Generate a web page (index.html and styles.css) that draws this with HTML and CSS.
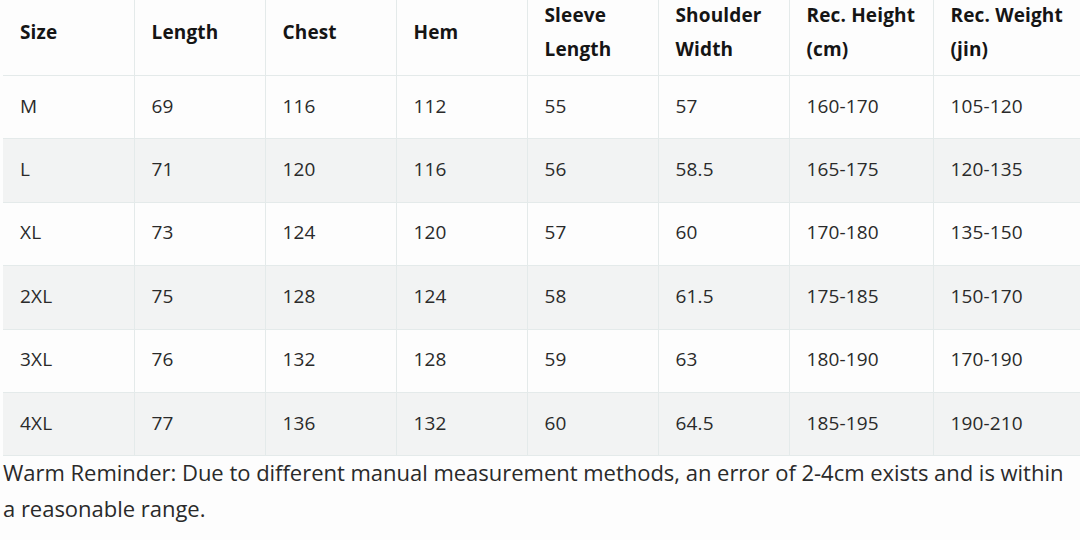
FILE: index.html
```html
<!DOCTYPE html>
<html lang="en">
<head>
<meta charset="utf-8">
<link rel="stylesheet" href="styles.css">
</head>
<body>
<div class="page">
  <table class="size-table">
    <colgroup>
      <col class="c-std"><col class="c-std"><col class="c-std"><col class="c-std">
      <col class="c-std"><col class="c-std"><col class="c-wide"><col class="c-last">
    </colgroup>
    <thead>
      <tr>
        <th>Size</th><th>Length</th><th>Chest</th><th>Hem</th>
        <th>Sleeve<br>Length</th><th>Shoulder<br>Width</th>
        <th>Rec. Height<br>(cm)</th><th>Rec. Weight<br>(jin)</th>
      </tr>
    </thead>
    <tbody>
      <tr><td>M</td><td>69</td><td>116</td><td>112</td><td>55</td><td>57</td><td>160-170</td><td>105-120</td></tr>
      <tr><td>L</td><td>71</td><td>120</td><td>116</td><td>56</td><td>58.5</td><td>165-175</td><td>120-135</td></tr>
      <tr><td>XL</td><td>73</td><td>124</td><td>120</td><td>57</td><td>60</td><td>170-180</td><td>135-150</td></tr>
      <tr><td>2XL</td><td>75</td><td>128</td><td>124</td><td>58</td><td>61.5</td><td>175-185</td><td>150-170</td></tr>
      <tr><td>3XL</td><td>76</td><td>132</td><td>128</td><td>59</td><td>63</td><td>180-190</td><td>170-190</td></tr>
      <tr><td>4XL</td><td>77</td><td>136</td><td>132</td><td>60</td><td>64.5</td><td>185-195</td><td>190-210</td></tr>
    </tbody>
  </table>
  <p class="note">Warm Reminder: Due to different manual measurement methods, an error of 2-4cm exists and is within a reasonable range.</p>
</div>
</body>
</html>
```

FILE: styles.css
```css
html, body {
  margin: 0;
  padding: 0;
  background: #fdfdfd;
  overflow: hidden;
}
body {
  width: 1080px;
  height: 540px;
  font-family: "Open Sans", "Noto Sans", sans-serif;
  color: #2a2a2a;
}
.page {
  padding-left: 3px;
  width: 1077px;
}
.size-table {
  border-collapse: collapse;
  table-layout: fixed;
  width: 1094px;
  margin-top: -13px;
  font-size: 19px;
  letter-spacing: 0.15px;
}
.c-std { width: 131px; }
.c-wide { width: 144px; }
.c-last { width: 164px; }
.size-table th,
.size-table td {
  border: 1px solid #e4eaea;
  text-align: left;
  padding: 0 0 0 17px;
  vertical-align: middle;
}
.size-table tr > :first-child { border-left: none; }
.size-table thead tr { height: 88px; }
.size-table th {
  font-weight: 700;
  color: #151515;
  line-height: 34px;
}
.size-table tbody tr { height: 63.4px; }
.size-table tbody tr:nth-child(even) td { background: #f2f3f3; }
.size-table td { color: #2a2a2a; padding-bottom: 3px; }
.note {
  margin: 0;
  margin-top: -2px;
  font-size: 22px;
  letter-spacing: -0.02px;
  line-height: 36px;
  color: #2a2a2a;
}
```
